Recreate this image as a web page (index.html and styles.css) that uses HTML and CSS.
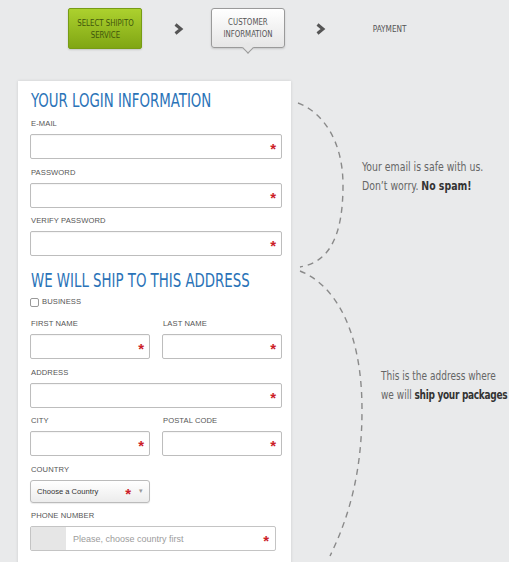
FILE: index.html
```html
<!DOCTYPE html>
<html>
<head>
<meta charset="utf-8">
<link rel="stylesheet" href="styles.css">
</head>
<body>
<div class="page">
  <nav class="steps">
    <div class="step step-done"><span class="step-text">SELECT SHIPITO<br>SERVICE</span></div>
    <div class="arrow"><svg width="11" height="12" viewBox="0 0 11 12"><path d="M2.5 1.5 L8 6 L2.5 10.5" fill="none" stroke="#555" stroke-width="3"/></svg></div>
    <div class="step step-current"><span class="step-text">CUSTOMER<br>INFORMATION</span></div>
    <div class="arrow arrow-2"><svg width="11" height="12" viewBox="0 0 11 12"><path d="M2.5 1.5 L8 6 L2.5 10.5" fill="none" stroke="#555" stroke-width="3"/></svg></div>
    <div class="step step-next"><span class="step-text">PAYMENT</span></div>
  </nav>

  <main class="main">
    <form class="panel">
      <h2 class="heading"><span class="narrow">YOUR LOGIN INFORMATION</span></h2>
      <div class="field">
        <label class="label">E-MAIL</label>
        <div class="input"><span class="req">*</span></div>
      </div>
      <div class="field">
        <label class="label">PASSWORD</label>
        <div class="input"><span class="req">*</span></div>
      </div>
      <div class="field">
        <label class="label">VERIFY PASSWORD</label>
        <div class="input"><span class="req">*</span></div>
      </div>

      <h2 class="heading heading-2"><span class="narrow">WE WILL SHIP TO THIS ADDRESS</span></h2>
      <div class="check-row"><span class="checkbox"></span><span class="label">BUSINESS</span></div>
      <div class="row2">
        <div class="field">
          <label class="label">FIRST NAME</label>
          <div class="input"><span class="req">*</span></div>
        </div>
        <div class="field">
          <label class="label">LAST NAME</label>
          <div class="input"><span class="req">*</span></div>
        </div>
      </div>
      <div class="field">
        <label class="label">ADDRESS</label>
        <div class="input"><span class="req">*</span></div>
      </div>
      <div class="row2">
        <div class="field">
          <label class="label">CITY</label>
          <div class="input"><span class="req">*</span></div>
        </div>
        <div class="field">
          <label class="label">POSTAL CODE</label>
          <div class="input"><span class="req">*</span></div>
        </div>
      </div>
      <div class="field">
        <label class="label">COUNTRY</label>
        <div class="select"><span class="select-text">Choose a Country</span><span class="req">*</span><span class="caret">▾</span></div>
      </div>
      <div class="field">
        <label class="label">PHONE NUMBER</label>
        <div class="phone"><span class="prefix"></span><span class="placeholder">Please, choose country first</span><span class="req">*</span></div>
      </div>
    </form>

    <aside class="notes">
      <p class="note note-1">Your email is safe with us.<br>Don’t worry. <b>No spam!</b></p>
      <p class="note note-2">This is the address where<br>we will <b>ship your packages</b></p>
    </aside>
  </main>

  <svg class="braces" width="509" height="562" viewBox="0 0 509 562">
    <path d="M298 103 C322 112 343 140 343 185 C343 235 330 262 300 267" fill="none" stroke="#8a8a8a" stroke-width="1.4" stroke-dasharray="6 5"/>
    <path d="M300 271 C335 285 362 330 362 410 C362 470 350 515 330 556" fill="none" stroke="#8a8a8a" stroke-width="1.4" stroke-dasharray="6 5"/>
  </svg>
</div>
</body>
</html>
```

FILE: styles.css
```css
* { box-sizing: border-box; }
html, body { margin: 0; padding: 0; }
body {
  background: #e9eaeb;
  font-family: "Liberation Sans", Arial, sans-serif;
  width: 509px;
  height: 562px;
  overflow: hidden;
}
.page { position: relative; height: 562px; overflow: hidden; }

.steps {
  display: flex;
  align-items: center;
  padding: 8px 0 0 68px;
  height: 49px;
}
.step {
  width: 74px;
  height: 41px;
  display: flex;
  align-items: center;
  justify-content: center;
  text-align: center;
  font-family: "DejaVu Sans Condensed", sans-serif;
  font-size: 9.5px;
  line-height: 12px;
  color: #555;
}
.step-text {
  display: inline-block;
  transform: scaleX(0.82);
  white-space: nowrap;
}
.step-done {
  background: linear-gradient(#acd12e, #80a614);
  border: 1px solid #779c14;
  border-radius: 2px;
  color: #3f560c;
  box-shadow: 0 1px 2px rgba(0,0,0,0.15);
}
.step-current {
  position: relative;
  height: 40px;
  margin-top: -1px;
  background: linear-gradient(#ffffff, #e6e6e6);
  border: 1px solid #9a9a9a;
  border-radius: 3px;
  box-shadow: 0 1px 2px rgba(0,0,0,0.15);
}
.step-current::after {
  content: "";
  position: absolute;
  left: 32px;
  bottom: -5px;
  width: 7px;
  height: 7px;
  background: #e7e7e7;
  border-right: 1px solid #9a9a9a;
  border-bottom: 1px solid #9a9a9a;
  transform: rotate(45deg);
}
.step-next { padding-top: 1px; }
.step-next .step-text { transform: scaleX(0.86); }
.arrow {
  width: 69px;
  display: flex;
  justify-content: center;
  padding-left: 3px;
}
.arrow-2 { width: 68px; }

.main {
  display: flex;
  margin-top: 32px;
}
.panel {
  margin: 0 0 0 18px;
  width: 273px;
  flex: 0 0 273px;
  height: 490px;
  background: #fff;
  padding: 8px 9px 0 12px;
  box-shadow: 0 0 3px rgba(0,0,0,0.12);
}
.heading {
  margin: 0 0 8px 1px;
  font-family: "DejaVu Sans Condensed", sans-serif;
  font-weight: normal;
  font-size: 19px;
  line-height: 22px;
  color: #2a73b8;
  white-space: nowrap;
}
.narrow {
  display: inline-block;
  transform: scaleX(0.78);
  transform-origin: left center;
}
.heading-2 { margin-top: 13px; margin-bottom: 5px; }
.label {
  display: block;
  font-size: 7.6px;
  line-height: 10px;
  color: #555;
  margin: 0 0 5px 1px;
  letter-spacing: 0.1px;
}
.field { margin-bottom: 8.5px; }
.input {
  height: 25px;
  border: 1px solid #bdbdbd;
  border-radius: 2px;
  display: flex;
  align-items: center;
  justify-content: flex-end;
  padding-right: 5px;
  box-shadow: inset 0 1px 1px rgba(0,0,0,0.04);
}
.req {
  color: #cc1f2a;
  font-weight: bold;
  font-size: 15px;
  line-height: 10px;
  padding-top: 5px;
}
.check-row {
  display: flex;
  align-items: center;
  margin: 6px 0 12px;
}
.checkbox {
  width: 9px;
  height: 9px;
  border: 1px solid #999;
  border-radius: 2px;
  background: #fff;
  margin-right: 3px;
}
.check-row .label { margin: 0; }
.row2 {
  display: grid;
  grid-template-columns: 120px 120px;
  column-gap: 12px;
}
.select {
  width: 120px;
  height: 23px;
  border: 1px solid #bbb;
  border-radius: 3px;
  background: linear-gradient(#ffffff, #ececec);
  display: flex;
  align-items: center;
  padding: 0 6px 0 6px;
  box-shadow: 0 1px 1px rgba(0,0,0,0.08);
}
.select-text {
  flex: 1;
  font-size: 7.6px;
  color: #333;
}
.select .req { margin-right: 8px; }
.caret { font-size: 7px; color: #999; }
.phone {
  width: 246px;
  height: 25px;
  border: 1px solid #c4c4c4;
  border-radius: 2px;
  display: flex;
  align-items: center;
  padding-right: 6px;
}
.prefix {
  width: 35px;
  align-self: stretch;
  background: #e6e6e6;
}
.placeholder {
  flex: 1;
  padding-left: 7px;
  font-size: 9px;
  color: #9c9c9c;
}

.notes {
  flex: 1;
  min-width: 0;
  overflow: hidden;
  font-family: "DejaVu Sans Condensed", sans-serif;
}
.note {
  margin: 0;
  font-size: 13px;
  line-height: 19px;
  color: #666;
  white-space: nowrap;
  transform: scaleX(0.8);
  transform-origin: left top;
}
.note b { font-weight: bold; color: #333; }
.note-1 { margin: 76px 0 0 71px; }
.note-2 { margin: 171px 0 0 90px; transform: scaleX(0.77); }
.note-2 b { letter-spacing: -0.4px; }

.braces {
  position: absolute;
  left: 0;
  top: 0;
  pointer-events: none;
}
```
